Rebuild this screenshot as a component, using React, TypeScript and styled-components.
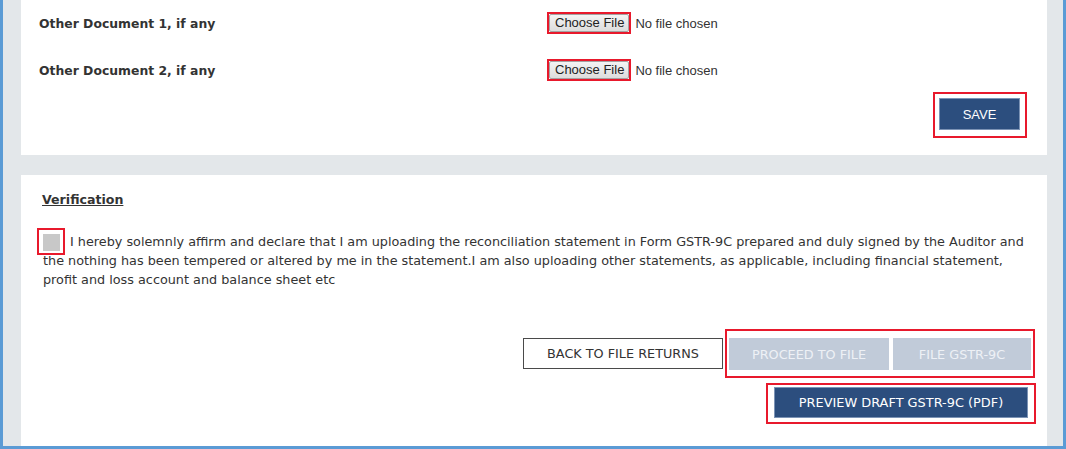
import React from "react";
import styled, { createGlobalStyle } from "styled-components";

const GlobalStyle = createGlobalStyle`
  html, body {
    margin: 0;
    padding: 0;
    background: #ffffff;
  }
  body {
    font-family: "DejaVu Sans", Verdana, sans-serif;
    color: #333333;
  }
`;

const Frame = styled.div`
  box-sizing: border-box;
  width: 1066px;
  height: 449px;
  overflow: hidden;
  background: #e3e7ea;
  border-left: 3px solid #5b9bd5;
  border-right: 3px solid #5b9bd5;
  border-bottom: 3px solid #5b9bd5;
  padding: 0 16px 0 18px;
  display: flex;
  flex-direction: column;
  gap: 20px;
`;

const UploadCard = styled.section`
  box-sizing: border-box;
  height: 155px;
  background: #ffffff;
  padding: 12px 20px 0 18px;
  display: flex;
  flex-direction: column;
`;

const DocGrid = styled.div`
  display: grid;
  grid-template-columns: 508px auto;
  grid-auto-rows: 22px;
  row-gap: 25px;
  align-items: center;
`;

const DocLabel = styled.div`
  font-size: 12.4px;
  font-weight: bold;
  color: #333333;
`;

const FileField = styled.div`
  display: flex;
  align-items: center;
  font-family: "Liberation Sans", Arial, sans-serif;
  font-size: 13px;
  color: #333333;
`;

const Highlight = styled.span<{ $pad: string }>`
  display: inline-flex;
  align-items: center;
  gap: 4px;
  border: 2px solid #e8192c;
  padding: ${({ $pad }) => $pad};
  background: #ffffff;
`;

const FileButton = styled.button`
  height: 18px;
  padding: 0 4px 0 5px;
  font-family: "Liberation Sans", Arial, sans-serif;
  font-size: 13px;
  color: #222222;
  background: linear-gradient(#f3f3f3, #dddddd);
  border: 1px solid #a3a3a3;
  border-radius: 2px;
  line-height: 16px;
`;

const NoFile = styled.span`
  margin-left: 4px;
`;

const SaveRow = styled.div`
  display: flex;
  justify-content: flex-end;
  margin-top: 11px;
`;

const PrimaryButton = styled.button<{ $w: number; $h: number }>`
  width: ${({ $w }) => $w}px;
  height: ${({ $h }) => $h}px;
  background: #2c4e7e;
  color: #ffffff;
  border: 1px solid #7c93b5;
  font-family: ${({ $w }) =>
    $w < 100 ? `"Liberation Sans", Arial, sans-serif` : `"DejaVu Sans", Verdana, sans-serif`};
  font-size: ${({ $w }) => ($w < 100 ? 13 : 12.9)}px;
  padding: 0;
`;

const VerifyCard = styled.section`
  flex: 1;
  background: #ffffff;
  padding: 17px 11px 0 21px;
  display: flex;
  flex-direction: column;
`;

const SectionTitle = styled.h3`
  margin: 0;
  font-size: 12.6px;
  font-weight: bold;
  line-height: 16px;
  text-decoration: underline;
  color: #333333;
`;

const Declaration = styled.p`
  margin: 24px 0 0 0;
  padding-left: 1px;
  padding-right: 11px;
  font-size: 12.8px;
  line-height: 19px;
  color: #333333;
`;

const CheckHighlight = styled.span`
  display: inline-block;
  vertical-align: middle;
  margin: -6px 5px -4px -6px;
  border: 2px solid #e8192c;
  padding: 4px 3px 2px 4px;
  line-height: 0;
`;

const CheckBox = styled.span`
  display: inline-block;
  width: 17px;
  height: 17px;
  background: #c8c8c8;
`;

const ActionArea = styled.div`
  margin-top: 40px;
  display: flex;
  flex-direction: column;
  align-items: flex-end;
  gap: 5px;
`;

const ActionRow = styled.div`
  display: flex;
  align-items: center;
  gap: 2px;
  margin-right: 1px;
`;

const OutlineButton = styled.button`
  width: 200px;
  height: 31px;
  margin-top: -1px;
  background: #ffffff;
  border: 1px solid #4a4a4a;
  color: #333333;
  font-family: "DejaVu Sans", Verdana, sans-serif;
  font-size: 12.8px;
  padding: 0;
`;

const DisabledButton = styled.button<{ $w: number }>`
  width: ${({ $w }) => $w}px;
  height: 32px;
  background: #c1cbd9;
  border: none;
  color: #eef1f6;
  font-family: "DejaVu Sans", Verdana, sans-serif;
  font-size: 12.8px;
  padding: 0;
`;

const App: React.FC = () => (
  <>
    <GlobalStyle />
    <Frame>
      <UploadCard>
        <DocGrid>
          {["Other Document 1, if any", "Other Document 2, if any"].map((label) => (
            <React.Fragment key={label}>
              <DocLabel>{label}</DocLabel>
              <FileField>
                <Highlight $pad="0">
                  <FileButton>Choose File</FileButton>
                </Highlight>
                <NoFile>No file chosen</NoFile>
              </FileField>
            </React.Fragment>
          ))}
        </DocGrid>
        <SaveRow>
          <Highlight $pad="4px 5px 6px 4px">
            <PrimaryButton $w={81} $h={32}>SAVE</PrimaryButton>
          </Highlight>
        </SaveRow>
      </UploadCard>
      <VerifyCard>
        <SectionTitle>Verification</SectionTitle>
        <Declaration>
          <CheckHighlight>
            <CheckBox />
          </CheckHighlight>
          I hereby solemnly affirm and declare that I am uploading the reconciliation statement in
          Form GSTR-9C prepared and duly signed by the Auditor and the nothing has been tempered or
          altered by me in the statement.I am also uploading other statements, as applicable,
          including financial statement, profit and loss account and balance sheet etc
        </Declaration>
        <ActionArea>
          <ActionRow>
            <OutlineButton>BACK TO FILE RETURNS</OutlineButton>
            <Highlight $pad="7px 2px 6px 2px">
              <DisabledButton $w={160}>PROCEED TO FILE</DisabledButton>
              <DisabledButton $w={138}>FILE GSTR-9C</DisabledButton>
            </Highlight>
          </ActionRow>
          <Highlight $pad="2px 6px 4px 6px">
            <PrimaryButton $w={254} $h={31}>PREVIEW DRAFT GSTR-9C (PDF)</PrimaryButton>
          </Highlight>
        </ActionArea>
      </VerifyCard>
    </Frame>
  </>
);

export default App;
